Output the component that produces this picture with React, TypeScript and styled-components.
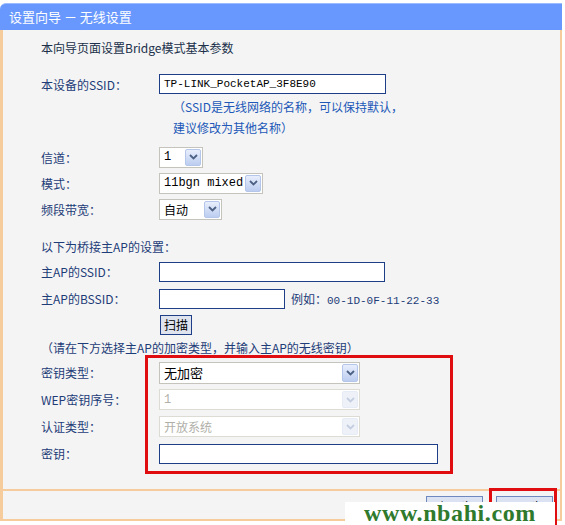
import React from 'react';
import styled, { createGlobalStyle } from 'styled-components';

const GlobalStyle = createGlobalStyle`
  html, body {
    margin: 0;
    padding: 0;
    background: #ffffff;
  }
  body {
    font-family: "Noto Sans CJK SC", "Liberation Sans", sans-serif;
    font-size: 12px;
  }
`;

const Page = styled.div`
  position: relative;
  width: 565px;
  height: 525px;
  overflow: hidden;
  padding-top: 3px;
  box-sizing: border-box;
`;

const Frame = styled.div`
  width: 562px;
`;

const TitleBar = styled.div`
  height: 26px;
  background: #6898fd;
  border-top: 1px solid #9cbcff;
  border-top-left-radius: 6px;
  color: #ffffff;
  font-size: 13px;
  line-height: 25px;
  padding-left: 9px;
`;

const Body = styled.div`
  background: #f4f4f4;
  border-left: 3px solid #f6cc9c;
  border-right: 2px solid #f6cc9c;
  border-bottom: 2px solid #f6cc9c;
  padding: 8px 0 22px 38px;
  display: flex;
  flex-direction: column;
`;

const Footer = styled.div`
  height: 28px;
  background: #f4f4f4;
  border-left: 3px solid #f6cc9c;
  border-right: 2px solid #f6cc9c;
  border-bottom: 2px solid #f6cc9c;
  display: flex;
  justify-content: flex-end;
  align-items: flex-end;
  gap: 13px;
  padding-right: 7px;
`;

const Heading = styled.div`
  color: #20304a;
  font-size: 12px;
  height: 20px;
  line-height: 20px;
  margin-bottom: 14px;
`;

const Row = styled.div<{ $h?: number }>`
  display: flex;
  align-items: center;
  height: ${p => p.$h ?? 26}px;
`;

const Label = styled.div`
  width: 118px;
  color: #1d3c78;
  font-size: 12px;
  flex-shrink: 0;
`;

const Section = styled.div<{ $top?: number }>`
  color: #1d3c78;
  font-size: 12px;
  height: 22px;
  line-height: 22px;
  margin-top: ${p => p.$top ?? 0}px;
`;

const Hint = styled.div<{ $last?: boolean }>`
  color: #2158b8;
  font-size: 12px;
  line-height: 21px;
  padding-left: 132px;
  margin-bottom: ${p => (p.$last ? 6 : 0)}px;
`;

const TextBox = styled.div<{ $w: number }>`
  width: ${p => p.$w}px;
  height: 20px;
  box-sizing: border-box;
  background: #ffffff;
  border: 1px solid #1e3f88;
  font-family: "Liberation Mono", monospace;
  font-size: 11px;
  line-height: 18px;
  padding-left: 4px;
  color: #000;
`;

const SelectBox = styled.div<{ $w: number; $h?: number; $disabled?: boolean }>`
  width: ${p => p.$w}px;
  height: ${p => p.$h ?? 21}px;
  box-sizing: border-box;
  background: #ffffff;
  border: 1px solid ${p => (p.$disabled ? '#dcdcd4' : '#c4c4bc')};
  display: flex;
  align-items: center;
  justify-content: space-between;
  padding: 1px;
`;

const SelectText = styled.span<{ $mono?: boolean; $disabled?: boolean; $size?: number }>`
  padding-left: 3px;
  font-family: ${p => (p.$mono ? '"Liberation Mono", monospace' : '"Noto Sans CJK SC", sans-serif')};
  font-size: ${p => p.$size ?? 12}px;
  color: ${p => (p.$disabled ? '#b0b0a8' : '#000')};
  white-space: nowrap;
`;

const ArrowBtn = styled.span<{ $disabled?: boolean }>`
  width: 16px;
  height: 100%;
  box-sizing: border-box;
  display: flex;
  align-items: center;
  justify-content: center;
  border: 1px solid ${p => (p.$disabled ? '#e6ecf6' : '#b4c6ea')};
  background: ${p => (p.$disabled ? '#eef2f8' : 'linear-gradient(#e8eefc, #bccdf0)')};
  border-radius: 2px;
`;

const Example = styled.span`
  color: #1d3c78;
  margin-left: 6px;
  font-size: 12px;
  span {
    font-family: "Liberation Mono", monospace;
    font-size: 11px;
  }
`;

const ScanButton = styled.div`
  height: 20px;
  box-sizing: border-box;
  padding: 0 3px;
  border: 1px solid #1e3f88;
  background: #dfe3ee;
  font-size: 12px;
  line-height: 17px;
  color: #000;
  margin-left: 1px;
`;

const NavButton = styled.div`
  width: 57px;
  height: 22px;
  box-sizing: border-box;
  border: 1px solid #6f88c0;
  background: #dbe2f2;
  text-align: center;
  font-size: 12px;
  line-height: 20px;
  color: #000;
  margin-bottom: 1px;
`;

const Highlight = styled.div<{ $x: number; $y: number; $w: number; $h: number }>`
  position: absolute;
  left: ${p => p.$x}px;
  top: ${p => p.$y}px;
  width: ${p => p.$w}px;
  height: ${p => p.$h}px;
  box-sizing: border-box;
  border: 3px solid #e00d10;
  pointer-events: none;
`;

const Watermark = styled.div`
  position: absolute;
  left: 345px;
  top: 502px;
  width: 210px;
  height: 23px;
  background: #ffffff;
  color: #2f7a2c;
  font-family: "Liberation Serif", serif;
  font-weight: bold;
  font-size: 24px;
  line-height: 22px;
  text-align: center;
  letter-spacing: 0.6px;
  overflow: hidden;
`;

const Chevron: React.FC<{ disabled?: boolean }> = ({ disabled }) => (
  <svg width="9" height="6" viewBox="0 0 9 6">
    <path
      d="M1 1 L4.5 4.5 L8 1"
      fill="none"
      stroke={disabled ? '#c4cee0' : '#4d6185'}
      strokeWidth="1.8"
    />
  </svg>
);

interface SelectProps {
  width: number;
  value: string;
  mono?: boolean;
  disabled?: boolean;
  height?: number;
  size?: number;
}

const Select: React.FC<SelectProps> = ({ width, value, mono, disabled, height, size }) => (
  <SelectBox $w={width} $h={height} $disabled={disabled}>
    <SelectText $mono={mono} $disabled={disabled} $size={size}>
      {value}
    </SelectText>
    <ArrowBtn $disabled={disabled}>
      <Chevron disabled={disabled} />
    </ArrowBtn>
  </SelectBox>
);

export default function App() {
  return (
    <Page>
      <GlobalStyle />
      <Frame>
        <TitleBar>设置向导 － 无线设置</TitleBar>
        <Body>
          <Heading>本向导页面设置Bridge模式基本参数</Heading>
          <Row $h={24}>
            <Label>本设备的SSID：</Label>
            <TextBox $w={227}>TP-LINK_PocketAP_3F8E90</TextBox>
          </Row>
          <Hint>（SSID是无线网络的名称，可以保持默认，</Hint>
          <Hint $last>建议修改为其他名称）</Hint>
          <Row $h={26}>
            <Label>信道：</Label>
            <Select width={44} value="1" mono />
          </Row>
          <Row $h={26}>
            <Label>模式：</Label>
            <Select width={104} value="11bgn mixed" mono />
          </Row>
          <Row $h={26}>
            <Label>频段带宽：</Label>
            <Select width={63} value="自动" />
          </Row>
          <Section $top={14}>以下为桥接主AP的设置：</Section>
          <Row $h={27}>
            <Label>主AP的SSID：</Label>
            <TextBox $w={226} />
          </Row>
          <Row $h={27}>
            <Label>主AP的BSSID：</Label>
            <TextBox $w={126} />
            <Example>
              例如：<span>00-1D-0F-11-22-33</span>
            </Example>
          </Row>
          <Row $h={25}>
            <Label />
            <ScanButton>扫描</ScanButton>
          </Row>
          <Section>（请在下方选择主AP的加密类型，并输入主AP的无线密钥）</Section>
          <Row $h={27}>
            <Label>密钥类型：</Label>
            <Select width={201} height={22} value="无加密" size={13} />
          </Row>
          <Row $h={27}>
            <Label>WEP密钥序号：</Label>
            <Select width={201} value="1" mono disabled />
          </Row>
          <Row $h={27}>
            <Label>认证类型：</Label>
            <Select width={201} value="开放系统" disabled />
          </Row>
          <Row $h={27}>
            <Label>密钥：</Label>
            <TextBox $w={279} />
          </Row>
        </Body>
        <Footer>
          <NavButton>上一步</NavButton>
          <NavButton>下一步</NavButton>
        </Footer>
      </Frame>
      <Highlight $x={145} $y={355} $w={308} $h={119} />
      <Highlight $x={489} $y={488} $w={68} $h={40} />
      <Watermark>www.nbahi.com</Watermark>
    </Page>
  );
}
